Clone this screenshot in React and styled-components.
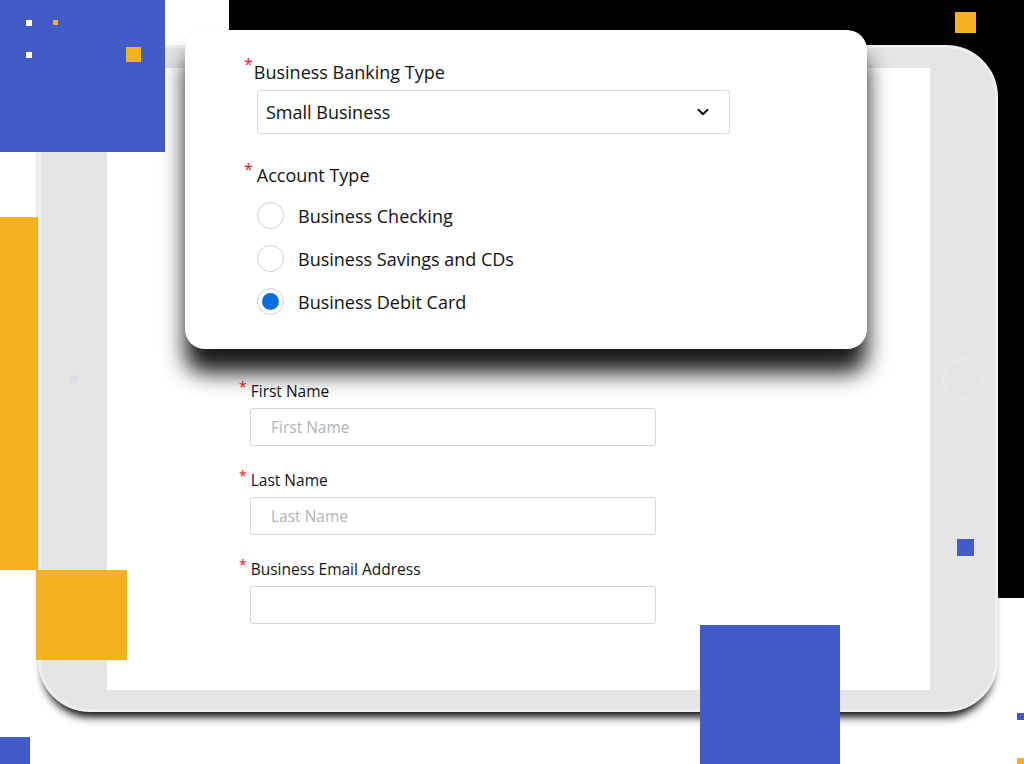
import React from 'react'
import styled, { createGlobalStyle } from 'styled-components'
import { ChevronDown } from 'lucide-react'

const GlobalStyle = createGlobalStyle`
  html, body {
    margin: 0;
    padding: 0;
    background: #fff;
  }
  body {
    font-family: "Open Sans", "Noto Sans", "Liberation Sans", sans-serif;
    color: #1b1b1b;
  }
`

const Stage = styled.div`
  position: relative;
  width: 1024px;
  height: 764px;
  overflow: hidden;
  background: #fff;
  padding: 45px 26px 0 38px;
  box-sizing: border-box;
`

// decorative squares scattered on the canvas
const Block = styled.div`
  position: absolute;
  left: ${p => p.x}px;
  top: ${p => p.y}px;
  width: ${p => p.w}px;
  height: ${p => p.h}px;
  background: ${p => p.color};
  z-index: ${p => p.z || 0};
`

const Tablet = styled.div`
  position: relative;
  display: flex;
  align-items: center;
  width: 960px;
  height: 667px;
  box-sizing: border-box;
  border-radius: 52px;
  background: #e5e5e5;
  border: 3px solid #efefef;
  box-shadow: 0 10px 8px -5px rgba(0, 0, 0, 0.95);
  z-index: 1;
`

const Bezel = styled.div`
  flex: 0 0 ${p => p.w}px;
  display: flex;
  align-items: center;
  justify-content: center;
`

const Camera = styled.span`
  width: 8px;
  height: 8px;
  border-radius: 50%;
  background: #dedee6;
`

const HomeButton = styled.span`
  width: 38px;
  height: 38px;
  border-radius: 50%;
  border: 1.5px solid #eeeeee;
`

const Screen = styled.div`
  flex: 1;
  align-self: stretch;
  margin: 20px 0 19px;
  background: #fff;
  padding: 312px 0 0 143px;
  box-sizing: border-box;
`

const Form = styled.div`
  display: flex;
  flex-direction: column;
  gap: 23px;
  width: 406px;
`

const Field = styled.div`
  display: flex;
  flex-direction: column;
  gap: 6px;
`

const Label = styled.div`
  display: flex;
  align-items: flex-start;
  font-size: ${p => p.size || 15.5}px;
  line-height: ${p => p.lh || 22}px;
  color: #141414;
  margin-left: ${p => p.indent ?? -11}px;
`

const Star = styled.span`
  color: #f01010;
  font-size: ${p => p.size || 14}px;
  line-height: ${p => p.lh || 14}px;
  margin-right: ${p => p.gap || 4}px;
  margin-top: ${p => p.top || 0}px;
`

const Input = styled.input`
  height: 38px;
  box-sizing: border-box;
  border: 1px solid #d6d6d6;
  border-radius: 3px;
  padding: 0 20px;
  font-family: inherit;
  font-size: 15.5px;
  color: #222;
  outline: none;
  &::placeholder {
    color: #b3b3b3;
  }
`

const Card = styled.div`
  position: absolute;
  left: 185px;
  top: 30px;
  width: 682px;
  height: 319px;
  box-sizing: border-box;
  background: #fff;
  border-radius: 20px;
  padding: 29px 0 0 71px;
  box-shadow: 0 24px 22px rgba(0, 0, 0, 0.9);
  z-index: 3;
`

const Select = styled.div`
  display: flex;
  align-items: center;
  justify-content: space-between;
  width: 473px;
  height: 44px;
  box-sizing: border-box;
  margin: 5px 0 0 1px;
  padding: 0 17px 0 8px;
  border: 1px solid #d9d9d9;
  border-radius: 3px;
  font-size: 18px;
  color: #111;
`

const Section = styled.div`
  margin-top: 28px;
`

const RadioList = styled.div`
  display: flex;
  flex-direction: column;
  margin: 6px 0 0 1px;
`

const RadioRow = styled.label`
  display: flex;
  align-items: center;
  gap: 14px;
  height: 43px;
  font-size: 18px;
  color: #111;
`

const Dot = styled.span`
  width: 27px;
  height: 27px;
  box-sizing: border-box;
  border-radius: 50%;
  border: 1px solid #cfcfcf;
  display: flex;
  align-items: center;
  justify-content: center;
  &::after {
    content: '';
    width: 17px;
    height: 17px;
    border-radius: 50%;
    background: ${p => (p.on ? '#0a6ddc' : 'transparent')};
  }
`

const accountTypes = [
  { label: 'Business Checking', on: false },
  { label: 'Business Savings and CDs', on: false },
  { label: 'Business Debit Card', on: true },
]

const fields = [
  { label: 'First Name', placeholder: 'First Name' },
  { label: 'Last Name', placeholder: 'Last Name' },
  { label: 'Business Email Address', placeholder: '' },
]

const BLUE = '#415bc8'
const GOLD = '#f4b223'

const squares = [
  { x: 229, y: 0, w: 795, h: 598, color: '#000', z: 0 },
  { x: 0, y: 0, w: 165, h: 152, color: BLUE, z: 2 },
  { x: 26, y: 20, w: 6, h: 6, color: '#fff', z: 2 },
  { x: 53, y: 20, w: 5, h: 5, color: GOLD, z: 2 },
  { x: 26, y: 52, w: 6, h: 6, color: '#fff', z: 2 },
  { x: 126, y: 47, w: 15, h: 15, color: GOLD, z: 2 },
  { x: 955, y: 12, w: 21, h: 21, color: GOLD, z: 2 },
  { x: 0, y: 217, w: 38, h: 353, color: GOLD, z: 2 },
  { x: 36, y: 570, w: 91, h: 90, color: GOLD, z: 2 },
  { x: 0, y: 737, w: 30, h: 27, color: BLUE, z: 2 },
  { x: 700, y: 625, w: 140, h: 139, color: BLUE, z: 2 },
  { x: 957, y: 539, w: 17, h: 17, color: BLUE, z: 2 },
  { x: 1017, y: 713, w: 7, h: 7, color: BLUE, z: 2 },
  { x: 1017, y: 758, w: 7, h: 6, color: GOLD, z: 2 },
]

export default function App() {
  return (
    <>
      <GlobalStyle />
      <Stage>
        {squares.map((s, i) => (
          <Block key={i} {...s} />
        ))}

        <Tablet>
          <Bezel w={66}>
            <Camera />
          </Bezel>
          <Screen>
            <Form>
              {fields.map(f => (
                <Field key={f.label}>
                  <Label>
                    <Star>*</Star>
                    {f.label}
                  </Label>
                  <Input placeholder={f.placeholder} readOnly />
                </Field>
              ))}
            </Form>
          </Screen>
          <Bezel w={65}>
            <HomeButton />
          </Bezel>
        </Tablet>

        <Card>
          <Label size={18} lh={26} indent={-12}>
            <Star size={16} lh={12} gap={1} top={-1}>*</Star>
            Business Banking Type
          </Label>
          <Select>
            Small Business
            <ChevronDown size={18} strokeWidth={2.6} color="#111" />
          </Select>
          <Section>
            <Label size={18} lh={26} indent={-12}>
              <Star size={16} lh={14} gap={4} top={0}>*</Star>
              Account Type
            </Label>
            <RadioList>
              {accountTypes.map(a => (
                <RadioRow key={a.label}>
                  <Dot on={a.on} />
                  {a.label}
                </RadioRow>
              ))}
            </RadioList>
          </Section>
        </Card>
      </Stage>
    </>
  )
}
